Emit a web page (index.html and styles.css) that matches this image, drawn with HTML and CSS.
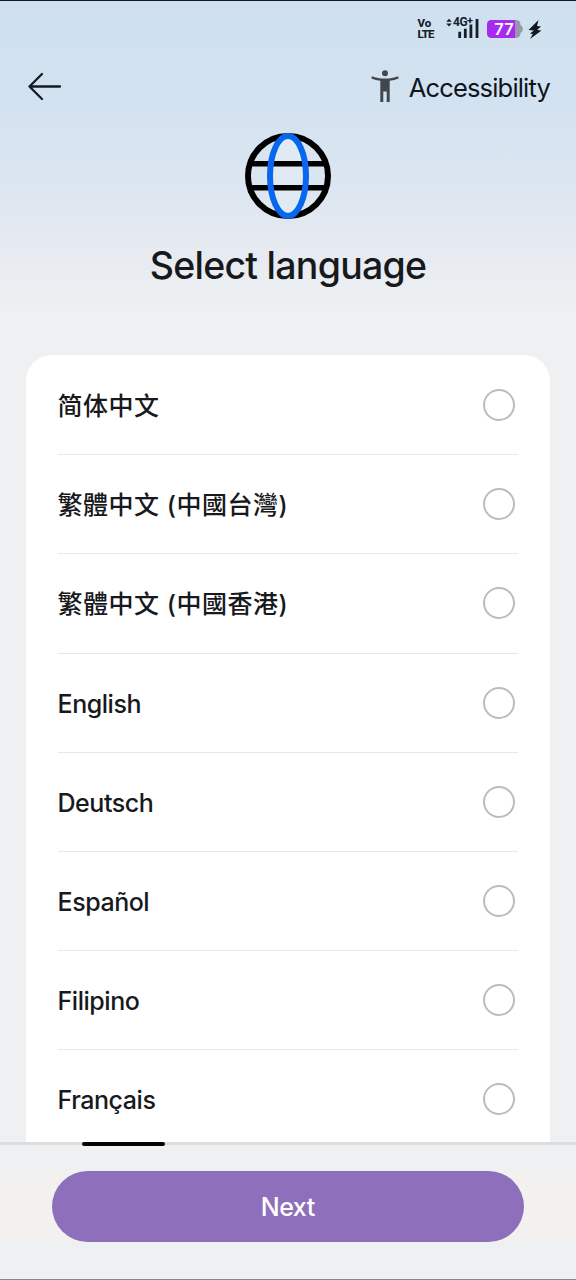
FILE: index.html
```html
<!DOCTYPE html>
<html lang="en">
<head>
<meta charset="utf-8">
<title>Select language</title>
<link rel="stylesheet" href="styles.css">
</head>
<body>
<div class="screen">
  <div class="status">
    <div class="volte"><span class="vo">Vo</span><span class="lte">LTE</span></div>
    <div class="signal">
      <svg width="34" height="24" viewBox="0 0 34 24"><path d="M.2 4.800 3 1.800l2.800 3zM.2 6.600h5.600L3 9.600z" fill="#15202b"/><path d="M13.700 14.700V21M19.300 11.700V21M24.900 7.500V21M31 2v19" stroke="#15202b" stroke-width="2.800" fill="none"/></svg>
      <span class="net">4G<sup>+</sup></span>
    </div>
    <svg class="battery" width="36" height="18" viewBox="0 0 36 18"><rect width="33.500" height="18" rx="4.500" fill="#9699ae"/><path d="M33 5q2.800 1 2.800 4T33 13z" fill="#9699ae"/><path d="M4.500 0H28v18H4.500A4.500 4.500 0 0 1 0 13.500v-9A4.500 4.500 0 0 1 4.500 0z" fill="#a62bee"/><text class="charge" x="17" y="15" text-anchor="middle">77</text></svg>
    <svg class="bolt" width="14" height="19" viewBox="0 0 14 19"><path d="M10.500 0 .5 10l5.500.4-4 3.200 2.800.3L2 19l11.500-8.500-4.500-.6L13 6.600 9 6z" fill="#10171f"/></svg>
  </div>
  <div class="nav">
    <svg width="34" height="28" viewBox="0 0 34 28" fill="none" stroke="#131c25" stroke-width="2.300" stroke-linecap="round" stroke-linejoin="round"><path d="M32 14.500H1.500M14 2 1.500 14.500 14 27"/></svg>
    <div class="access">
      <svg width="28" height="32" viewBox="0 0 28 32" fill="#42474d"><circle cx="14" cy="3.200" r="3"/><path d="M.9 6.200C5 7.700 9 8.500 14 8.500s9-.8 13.100-2.300l.6 2.200c-3 1.200-6 2-9 2.400V32h-3V21.500h-3.400V32h-3V10.800c-3-.4-6-1.200-9-2.400z"/></svg>
      <span>Accessibility</span>
    </div>
  </div>
  <svg class="globe" width="86" height="86" viewBox="0 0 86 86" fill="none"><path d="M6 30.800h74M6 54.800h74" stroke="#000" stroke-width="5.500"/><circle cx="43" cy="43" r="40" stroke="#000" stroke-width="6"/><ellipse cx="43" cy="43" rx="18" ry="40" fill="#dfeaf3" stroke="none"/><path d="M25 30.800h36M25 54.800h36" stroke="#000" stroke-width="5.500"/><ellipse cx="43" cy="43" rx="18" ry="40" stroke="#0866f0" stroke-width="6"/></svg>
  <h1 class="title">Select language</h1>
  <div class="list">
    <div class="row"><span class="zh sc" lang="zh-CN">简体中文</span><i class="radio"></i></div>
    <div class="row"><span class="zh" lang="zh-TW">繁體中文 (中國台灣)</span><i class="radio"></i></div>
    <div class="row"><span class="zh" lang="zh-HK">繁體中文 (中國香港)</span><i class="radio"></i></div>
    <div class="row"><span>English</span><i class="radio"></i></div>
    <div class="row"><span>Deutsch</span><i class="radio"></i></div>
    <div class="row"><span>Español</span><i class="radio"></i></div>
    <div class="row"><span>Filipino</span><i class="radio"></i></div>
    <div class="row"><span>Français</span><i class="radio"></i></div>
  </div>
  <div class="footer">
    <div class="track"><div class="thumb"></div></div>
    <div class="band"><button class="next">Next</button></div>
  </div>
</div>
</body>
</html>
```
FILE: styles.css
```css
* { box-sizing: border-box; }
body { margin: 0; font-family: Inter, Roboto, sans-serif; color: #17191c; }
.screen {
  height: 1280px;
  display: flex;
  flex-direction: column;
  overflow: hidden;
  border-top: 1px solid #101820;
  border-bottom: 1px solid #85878a;
  background: linear-gradient(#cee0ef 0, #d3e2f1 105px, #dde6f0 190px, #e6eaf1 245px, #eef0f2 315px);
}
.status { height: 55px; flex: none; padding: 16px 34px 0 417.500px; display: flex; align-items: flex-start; color: #15202b; }
.volte { width: 18px; margin-top: 0; display: flex; flex-direction: column; font-family: Roboto, sans-serif; font-weight: 800; }
.vo { font-size: 11.500px; line-height: 12px; }
.lte { font-size: 11.500px; line-height: 11px; letter-spacing: -0.800px; }
.signal { position: relative; margin-left: 10.500px; width: 34px; height: 24px; }
.net { position: absolute; left: 7px; top: -1px; font: 700 12px/13px Roboto, sans-serif; letter-spacing: -0.500px; white-space: nowrap; }
.net sup { font-size: 11px; line-height: 0; vertical-align: 2px; }
.battery { margin: 3px 0 0 7px; }
.charge { font: 600 16.500px Inter, sans-serif; fill: #fff; }
.bolt { margin: 3px 0 0 5px; }
.nav { height: 60px; flex: none; padding: 0 26px 0 28px; display: flex; align-items: center; justify-content: space-between; }
.access { display: flex; align-items: center; gap: 10px; font-size: 25.500px; line-height: 32px; letter-spacing: -0.820px; color: #0e151d; }
.access span { padding-top: 3px; }
.globe { flex: none; margin: 17px auto 0; }
.title { margin: 22px 0 0; text-align: center; font-size: 37.500px; line-height: 50px; font-weight: 450; letter-spacing: -0.750px; }
.list { width: 524.500px; height: 787px; flex: none; margin: 64px 0 0 25.500px; padding: 1px 32px 0; overflow: hidden; background: #fff; border-radius: 26px 26px 0 0; }
.row { height: 99.200px; display: flex; align-items: center; justify-content: space-between; padding-right: 3px; border-bottom: 1px solid #e7e7e8; font-size: 25px; line-height: 32px; font-weight: 450; letter-spacing: -0.450px; }
.row span { padding-top: 2px; }
.row .zh { font-family: Inter, "Noto Sans CJK TC", sans-serif; letter-spacing: 0.500px; }
.row .sc { font-family: Inter, "Noto Sans CJK SC", sans-serif; }
.radio { width: 32px; height: 32px; margin-right: 0.500px; border: 2px solid #bcbcbc; border-radius: 50%; }
.footer { flex: 1; background: #eff0f2; }
.track { height: 3px; background: #dcdddf; padding-left: 82px; }
.thumb { width: 83px; height: 4px; background: #000; border-radius: 2px; }
.band { margin-top: 26px; height: 71px; padding: 0 52px 0 51.500px; background: #f3f1ef; }
.next { width: 100%; height: 71px; border: 0; border-radius: 36px; background: #8d6fbc; color: #fff; font: 550 25px/71px Inter, sans-serif; letter-spacing: -0.500px; padding: 1px 0 0; }
```
